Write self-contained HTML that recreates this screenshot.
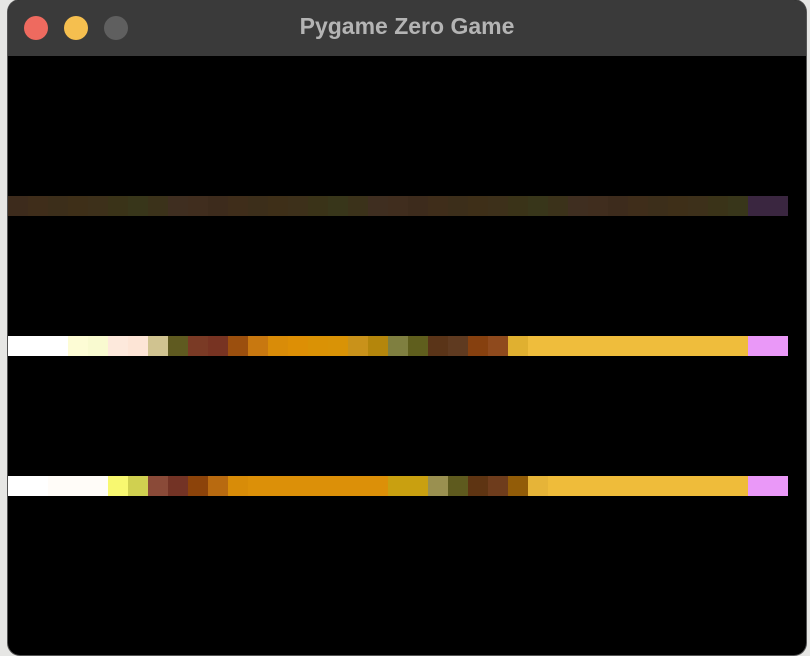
<!DOCTYPE html>
<html><head><meta charset="utf-8"><style>
html,body{margin:0;padding:0;width:810px;height:656px;overflow:hidden;background:#e6e6e4;font-family:"Liberation Sans",sans-serif}
.win{position:absolute;left:8px;top:0;width:798px;height:655px;background:#000;border-radius:12px;overflow:hidden;box-shadow:0 0 0 1px #555}
.tb{position:absolute;left:0;top:0;width:100%;height:56px;background:#3a3a3a}
.dot{position:absolute;top:16px;width:24px;height:24px;border-radius:50%}
.title{position:absolute;left:0;width:100%;top:13px;text-align:center;color:#b4b4b4;font-weight:bold;font-size:23px}
.bar{position:absolute;left:0;height:20px;display:flex}
.bar div{width:20px;height:20px}
</style></head><body>
<div class="win">
<div class="tb">
<div class="dot" style="left:16px;background:#ee6a5f"></div>
<div class="dot" style="left:56px;background:#f5bf4f"></div>
<div class="dot" style="left:96px;background:#5f5f5f"></div>
<div class="title">Pygame Zero Game</div>
</div>
<div class="bar" style="top:196px" id="b1"></div>
<div class="bar" style="top:336px" id="b2"></div>
<div class="bar" style="top:476px" id="b3"></div>
</div>
<script>
function fill(id,cols){var e=document.getElementById(id);cols.forEach(function(c){var d=document.createElement('div');d.style.background=c;e.appendChild(d);});}
var t=[];for(var i=0;i<39;i++){t.push(['#3d2b1c','#3f2d1a','#3c2e1a','#3e2f18','#3d301a','#3a3318','#38361a','#3b321a','#3f2e20','#402d1e'][i%10]);}t[37]='#3a2640';t[38]='#3a2640';
fill('b1',t);
var m=['#fff','#fff','#fff','#fdfcd5','#f9fad0','#fde9dc','#fde5d6','#d0c390','#5f5a20','#7a3a25','#773322','#9b4f0e','#c87810','#d98c08','#dd8f05','#da9205','#d99306','#c9921a','#b4860c','#7f7f40','#5f5e1d','#5a3418','#5f3a20','#86400f','#8f4a1d','#e0b030'];
while(m.length<37)m.push('#efbd3c');m.push('#ea98f8','#ea98f8');fill('b2',m);
var b=['#fff','#fff','#fffcf8','#fffcf8','#fffcf8','#f8f870','#d0d050','#8a4a38','#733325','#8c430a','#b86a10','#d88c08'];
while(b.length<19)b.push('#dc9008');b.push('#c9a010','#c9a010','#9a9050','#5e5a1e','#5e3412','#6e3c1c','#925c08','#e6b438');
while(b.length<37)b.push('#efbc3a');b.push('#ea98f8','#ea98f8');fill('b3',b);
</script>
</body></html>
